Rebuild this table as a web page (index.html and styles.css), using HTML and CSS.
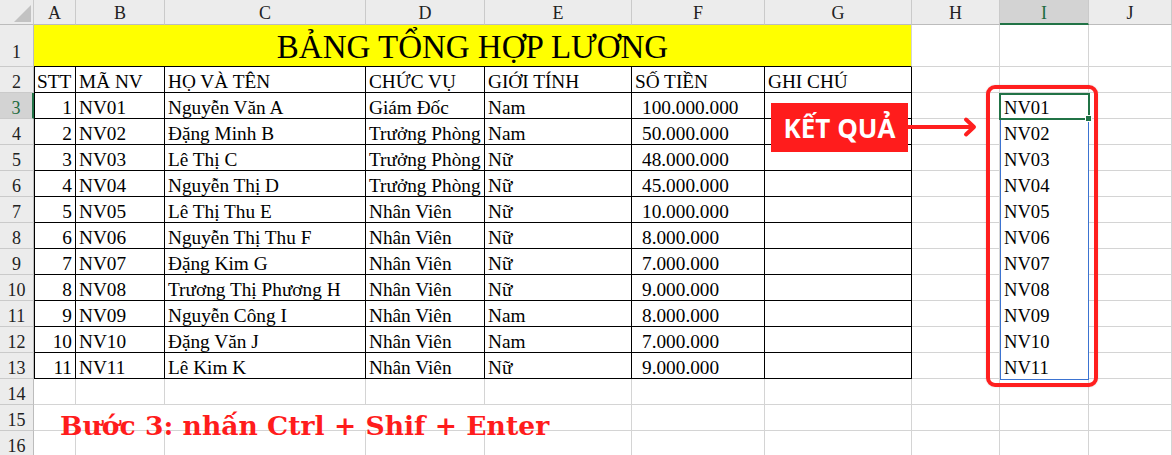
FILE: index.html
```html
<!DOCTYPE html>
<html lang="vi">
<head>
<meta charset="utf-8">
<title>Bảng tổng hợp lương</title>
<link rel="stylesheet" href="styles.css">
</head>
<body>
<div class="sheet">
  <div class="grid">
    <div class="ch corner"><svg width="34" height="25" viewBox="0 0 34 25"><polygon points="31,5 31,22 14,22" fill="#c2c2c2"/></svg></div>
    <div class="ch">A</div><div class="ch">B</div><div class="ch">C</div><div class="ch">D</div><div class="ch">E</div><div class="ch">F</div><div class="ch">G</div><div class="ch">H</div><div class="ch ch-sel">I</div><div class="ch">J</div>

    <div class="rh rh1">1</div><div class="title">BẢNG TỔNG HỢP LƯƠNG</div><div></div><div></div><div></div>

    <div class="rh">2</div><div class="t ta">STT</div><div class="t">MÃ NV</div><div class="t">HỌ VÀ TÊN</div><div class="t">CHỨC VỤ</div><div class="t">GIỚI TÍNH</div><div class="t">SỐ TIỀN</div><div class="t">GHI CHÚ</div><div></div><div></div><div></div>

    <div class="rh rh-sel">3</div><div class="t ta num">1</div><div class="t">NV01</div><div class="t">Nguyễn Văn A</div><div class="t">Giám Đốc</div><div class="t">Nam</div><div class="t money">100.000.000</div><div class="t"></div><div></div><div class="sel">NV01</div><div></div>
    <div class="rh">4</div><div class="t ta num">2</div><div class="t">NV02</div><div class="t">Đặng Minh B</div><div class="t">Trưởng Phòng</div><div class="t">Nam</div><div class="t money">50.000.000</div><div class="t"></div><div></div><div class="sel">NV02</div><div></div>
    <div class="rh">5</div><div class="t ta num">3</div><div class="t">NV03</div><div class="t">Lê Thị C</div><div class="t">Trưởng Phòng</div><div class="t">Nữ</div><div class="t money">48.000.000</div><div class="t"></div><div></div><div class="sel">NV03</div><div></div>
    <div class="rh">6</div><div class="t ta num">4</div><div class="t">NV04</div><div class="t">Nguyễn Thị D</div><div class="t">Trưởng Phòng</div><div class="t">Nữ</div><div class="t money">45.000.000</div><div class="t"></div><div></div><div class="sel">NV04</div><div></div>
    <div class="rh">7</div><div class="t ta num">5</div><div class="t">NV05</div><div class="t">Lê Thị Thu E</div><div class="t">Nhân Viên</div><div class="t">Nữ</div><div class="t money">10.000.000</div><div class="t"></div><div></div><div class="sel">NV05</div><div></div>
    <div class="rh">8</div><div class="t ta num">6</div><div class="t">NV06</div><div class="t">Nguyễn Thị Thu F</div><div class="t">Nhân Viên</div><div class="t">Nữ</div><div class="t money">8.000.000</div><div class="t"></div><div></div><div class="sel">NV06</div><div></div>
    <div class="rh">9</div><div class="t ta num">7</div><div class="t">NV07</div><div class="t">Đặng Kim G</div><div class="t">Nhân Viên</div><div class="t">Nữ</div><div class="t money">7.000.000</div><div class="t"></div><div></div><div class="sel">NV07</div><div></div>
    <div class="rh">10</div><div class="t ta num">8</div><div class="t">NV08</div><div class="t">Trương Thị Phương H</div><div class="t">Nhân Viên</div><div class="t">Nữ</div><div class="t money">9.000.000</div><div class="t"></div><div></div><div class="sel">NV08</div><div></div>
    <div class="rh">11</div><div class="t ta num">9</div><div class="t">NV09</div><div class="t">Nguyễn Công I</div><div class="t">Nhân Viên</div><div class="t">Nam</div><div class="t money">8.000.000</div><div class="t"></div><div></div><div class="sel">NV09</div><div></div>
    <div class="rh">12</div><div class="t ta num">10</div><div class="t">NV10</div><div class="t">Đặng Văn J</div><div class="t">Nhân Viên</div><div class="t">Nam</div><div class="t money">7.000.000</div><div class="t"></div><div></div><div class="sel">NV10</div><div></div>
    <div class="rh">13</div><div class="t ta num">11</div><div class="t">NV11</div><div class="t">Lê Kim K</div><div class="t">Nhân Viên</div><div class="t">Nữ</div><div class="t money">9.000.000</div><div class="t"></div><div></div><div class="sel">NV11</div><div></div>

    <div class="rh">14</div><div></div><div></div><div></div><div></div><div></div><div></div><div></div><div></div><div></div><div></div>
    <div class="rh">15</div><div class="note">Bước 3: nhấn Ctrl + Shif + Enter</div><div></div><div></div><div></div><div></div><div></div>
    <div class="rh">16</div><div></div><div></div><div></div><div></div><div></div><div></div><div></div><div></div><div></div><div></div>
  </div>

  <div class="range"></div>
  <div class="active"></div>
  <div class="handle"></div>
  <div class="redbox"></div>
  <div class="label">KẾT QUẢ</div>
  <svg class="arrow" width="74" height="26" viewBox="0 0 74 26">
    <line x1="0" y1="12" x2="67" y2="12" stroke="#ff1f1f" stroke-width="4"/>
    <polyline points="60,4.5 68,12 60,19.5" fill="none" stroke="#ff1f1f" stroke-width="4" stroke-linecap="round" stroke-linejoin="round"/>
  </svg>
</div>
</body>
</html>
```

FILE: styles.css
```css
body {
  margin: 0;
  background: #fff;
  font-family: "Liberation Serif", "Times New Roman", serif;
}

.sheet {
  position: relative;
  width: 1172px;
  height: 455px;
  overflow: hidden;
}

.grid {
  display: grid;
  grid-template-columns: 34px 42px 89px 201px 119px 147px 133px 147px 88px 89px 1fr;
  grid-template-rows: 25px 42px repeat(15, 26px);
}

.grid > div {
  box-sizing: border-box;
  border-right: 1px solid #d4d4d4;
  border-bottom: 1px solid #d4d4d4;
  font-size: 19.3px;
  line-height: 21px;
  padding: 4px 3px 0;
  white-space: nowrap;
  overflow: hidden;
  color: #000;
}

.grid > .ch {
  background: #ececec;
  text-align: center;
  font-size: 18px;
  line-height: 20px;
  padding: 3px 0 0;
  border-right-color: #cacaca;
  border-bottom-color: #bcbcbc;
  color: #222;
}

.grid > .corner {
  padding: 0;
  line-height: 0;
}

.grid > .ch-sel {
  background: #d3d3d3;
  color: #1e6b3f;
  border-bottom: 2px solid #217346;
}

.grid > .rh {
  background: #ececec;
  text-align: center;
  font-size: 18px;
  line-height: 20px;
  padding: 5px 0 0;
  border-right-color: #bcbcbc;
  border-bottom-color: #cacaca;
  color: #222;
}

.grid > .rh1 {
  padding-top: 17px;
}

.grid > .rh-sel {
  background: #d3d3d3;
  color: #1e6b3f;
  border-right: 2px solid #217346;
}

.grid > .title {
  grid-column: 2 / 9;
  background: #ffff00;
  border-bottom-color: #000;
  text-align: center;
  font-size: 33px;
  line-height: 36px;
  padding: 4px 0 0;
}

.grid > .t {
  border-right-color: #000;
  border-bottom-color: #000;
}

.grid > .ta {
  box-shadow: inset 1px 0 0 #000;
}

.grid > .num {
  text-align: right;
  padding-right: 3px;
}

.grid > .money {
  padding-left: 10px;
}

.grid > .sel {
  border-bottom-color: transparent;
  padding-left: 4px;
  font-size: 18.6px;
}

.grid > .note {
  grid-column: 2 / 7;
  overflow: visible;
  font-family: "DejaVu Serif", serif;
  font-weight: 700;
  font-size: 26.6px;
  line-height: 32px;
  color: #ff1c1c;
  padding: 5px 0 0 26px;
  position: relative;
  z-index: 1;
}

.range {
  position: absolute;
  left: 1000px;
  top: 93px;
  width: 89px;
  height: 287px;
  box-sizing: border-box;
  border: 1px solid #3b73d1;
}

.active {
  position: absolute;
  left: 999px;
  top: 93px;
  width: 91px;
  height: 27px;
  box-sizing: border-box;
  border: 2px solid #217346;
}

.handle {
  position: absolute;
  left: 1086px;
  top: 116px;
  width: 5px;
  height: 5px;
  background: #217346;
  outline: 1px solid #fff;
}

.redbox {
  position: absolute;
  left: 986px;
  top: 85px;
  width: 112px;
  height: 302px;
  box-sizing: border-box;
  border: 4px solid #ff1f1f;
  border-radius: 9px;
  box-shadow: 0 0 2px rgba(0, 0, 0, 0.15);
}

.label {
  position: absolute;
  left: 771px;
  top: 103px;
  width: 137px;
  height: 49px;
  background: #ff1c1c;
  color: #fff;
  font-family: "Open Sans", "Liberation Sans", sans-serif;
  font-weight: 700;
  font-size: 26px;
  display: flex;
  align-items: center;
  justify-content: center;
}

.arrow {
  position: absolute;
  left: 906px;
  top: 115px;
}
```
